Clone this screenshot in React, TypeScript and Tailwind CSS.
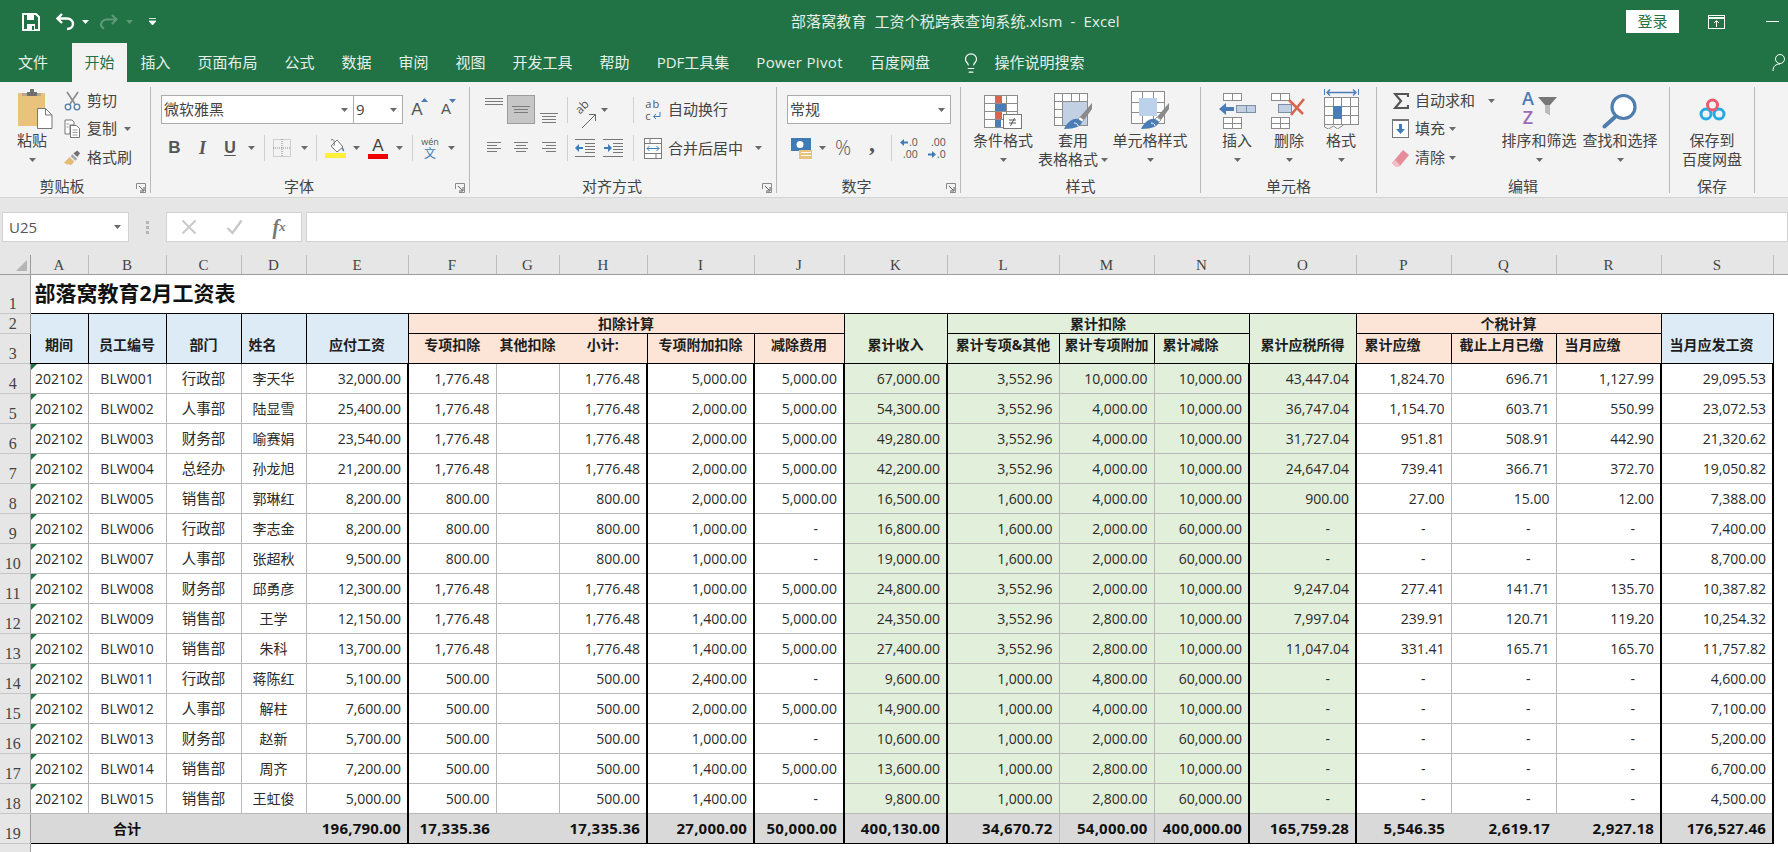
import type { ReactNode } from 'react'
import { Lightbulb } from 'lucide-react'

const COL_LETTERS = ['A', 'B', 'C', 'D', 'E', 'F', 'G', 'H', 'I', 'J', 'K', 'L', 'M', 'N', 'O', 'P', 'Q', 'R', 'S']

const COL_WIDTHS = [
  'w-[30px]', 'w-[58px]', 'w-[78px]', 'w-[75px]', 'w-[65px]', 'w-[102px]', 'w-[88px]', 'w-[63px]', 'w-[88px]', 'w-[107px]', 'w-[90px]',
  'w-[103px]', 'w-[112px]', 'w-[95px]', 'w-[95px]', 'w-[107px]', 'w-[95px]', 'w-[105px]', 'w-[105px]', 'w-[112px]', 'w-[15px]',
]

// id, dept, name, then columns E..S
const ROWS: string[][] = [
  ['BLW001', '行政部', '李天华', '32,000.00', '1,776.48', '', '1,776.48', '5,000.00', '5,000.00', '67,000.00', '3,552.96', '10,000.00', '10,000.00', '43,447.04', '1,824.70', '696.71', '1,127.99', '29,095.53'],
  ['BLW002', '人事部', '陆显雪', '25,400.00', '1,776.48', '', '1,776.48', '2,000.00', '5,000.00', '54,300.00', '3,552.96', '4,000.00', '10,000.00', '36,747.04', '1,154.70', '603.71', '550.99', '23,072.53'],
  ['BLW003', '财务部', '喻赛娟', '23,540.00', '1,776.48', '', '1,776.48', '2,000.00', '5,000.00', '49,280.00', '3,552.96', '4,000.00', '10,000.00', '31,727.04', '951.81', '508.91', '442.90', '21,320.62'],
  ['BLW004', '总经办', '孙龙旭', '21,200.00', '1,776.48', '', '1,776.48', '2,000.00', '5,000.00', '42,200.00', '3,552.96', '4,000.00', '10,000.00', '24,647.04', '739.41', '366.71', '372.70', '19,050.82'],
  ['BLW005', '销售部', '郭琳红', '8,200.00', '800.00', '', '800.00', '2,000.00', '5,000.00', '16,500.00', '1,600.00', '4,000.00', '10,000.00', '900.00', '27.00', '15.00', '12.00', '7,388.00'],
  ['BLW006', '行政部', '李志金', '8,200.00', '800.00', '', '800.00', '1,000.00', '-', '16,800.00', '1,600.00', '2,000.00', '60,000.00', '-', '-', '-', '-', '7,400.00'],
  ['BLW007', '人事部', '张超秋', '9,500.00', '800.00', '', '800.00', '1,000.00', '-', '19,000.00', '1,600.00', '2,000.00', '60,000.00', '-', '-', '-', '-', '8,700.00'],
  ['BLW008', '财务部', '邱勇彦', '12,300.00', '1,776.48', '', '1,776.48', '1,000.00', '5,000.00', '24,800.00', '3,552.96', '2,000.00', '10,000.00', '9,247.04', '277.41', '141.71', '135.70', '10,387.82'],
  ['BLW009', '销售部', '王学', '12,150.00', '1,776.48', '', '1,776.48', '1,400.00', '5,000.00', '24,350.00', '3,552.96', '2,800.00', '10,000.00', '7,997.04', '239.91', '120.71', '119.20', '10,254.32'],
  ['BLW010', '销售部', '朱科', '13,700.00', '1,776.48', '', '1,776.48', '1,400.00', '5,000.00', '27,400.00', '3,552.96', '2,800.00', '10,000.00', '11,047.04', '331.41', '165.71', '165.70', '11,757.82'],
  ['BLW011', '行政部', '蒋陈红', '5,100.00', '500.00', '', '500.00', '2,400.00', '-', '9,600.00', '1,000.00', '4,800.00', '60,000.00', '-', '-', '-', '-', '4,600.00'],
  ['BLW012', '人事部', '解柱', '7,600.00', '500.00', '', '500.00', '2,000.00', '5,000.00', '14,900.00', '1,000.00', '4,000.00', '10,000.00', '-', '-', '-', '-', '7,100.00'],
  ['BLW013', '财务部', '赵新', '5,700.00', '500.00', '', '500.00', '1,000.00', '-', '10,600.00', '1,000.00', '2,000.00', '60,000.00', '-', '-', '-', '-', '5,200.00'],
  ['BLW014', '销售部', '周齐', '7,200.00', '500.00', '', '500.00', '1,400.00', '5,000.00', '13,600.00', '1,000.00', '2,800.00', '10,000.00', '-', '-', '-', '-', '6,700.00'],
  ['BLW015', '销售部', '王虹俊', '5,000.00', '500.00', '', '500.00', '1,400.00', '-', '9,800.00', '1,000.00', '2,800.00', '60,000.00', '-', '-', '-', '-', '4,500.00'],
]

const TOTALS = ['196,790.00', '17,335.36', '', '17,335.36', '27,000.00', '50,000.00', '400,130.00', '34,670.72', '54,000.00', '400,000.00', '165,759.28', '5,546.35', '2,619.17', '2,927.18', '176,527.46']

// index into E..S: which columns end in a thick rule, which are tinted green
const THICK = [0, 3, 4, 5, 6, 9, 10, 13, 14]
const GREEN = [6, 7, 8, 9, 10]

function Caret({ className = '' }: { className?: string }) {
  return (
    <svg width="7" height="4" viewBox="0 0 7 4" className={`shrink-0 ${className}`}>
      <path d="M0 0h7L3.5 4z" fill="#6a6a6a" />
    </svg>
  )
}

function Cell({ className, children }: { className: string; children?: ReactNode }) {
  return <div className={`flex shrink-0 items-center justify-center ${className}`}>{children}</div>
}

function Sep() {
  return <div className="h-[26px] w-px bg-[#d0d0d0]" />
}

function Launcher() {
  return (
    <svg width="10" height="10" viewBox="0 0 10 10" className="absolute right-[4px] top-[5px]">
      <path d="M.5 6V.5H9.5V9.5H4" fill="none" stroke="#8a8a8a" />
      <path d="M3 3l4.500 4.500M8 4v4H4" fill="none" stroke="#5f5f5f" />
    </svg>
  )
}

function Group({ w, caption, pad = '', launcher, children }: { w: string; caption: string; pad?: string; launcher?: boolean; children: ReactNode }) {
  return (
    <div className={`mt-[5px] flex h-[106px] shrink-0 flex-col border-r border-[#b9b9b9] ${w}`}>
      <div className="flex h-[91px]">{children}</div>
      <div className={`relative h-[15px] text-center text-[15px] leading-[16px] text-[#444] ${pad}`}>
        {caption}
        {launcher && <Launcher />}
      </div>
    </div>
  )
}

function Big({ w, icon, lines, arrow = true }: { w: string; icon: ReactNode; lines: ReactNode[]; arrow?: boolean }) {
  return (
    <div className={`flex shrink-0 flex-col items-center text-[15px] leading-[19px] text-[#444] ${w}`}>
      <div className="flex h-[44px] items-end justify-center pb-[2px]">{icon}</div>
      {lines.map((line, i) => (
        <div key={i} className="flex items-center whitespace-nowrap">{line}</div>
      ))}
      {arrow && lines.length === 1 && (
        <div className="flex h-[19px] items-center">
          <Caret />
        </div>
      )}
    </div>
  )
}

function SmallRow({ h, icon, label, caret, caretGap = 'ml-[7px]' }: { h: string; icon: ReactNode; label: string; caret?: boolean; caretGap?: string }) {
  return (
    <div className={`flex items-center text-[15px] leading-[20px] text-[#444] ${h}`}>
      <div className="flex w-[17px] shrink-0 justify-center">{icon}</div>
      <span className="ml-[6px] -translate-y-[1px] whitespace-nowrap">{label}</span>
      {caret && <Caret className={caretGap} />}
    </div>
  )
}

function Combo({ w, label, className = '' }: { w: string; label: string; className?: string }) {
  return (
    <div className={`flex h-[29px] shrink-0 items-center justify-between border border-[#ababab] bg-white pl-[2px] pr-[5px] text-[15px] text-[#444] ${w} ${className}`}>
      <span>{label}</span>
      <Caret />
    </div>
  )
}

function Lines({ rows }: { rows: [number, number, number][] }) {
  return (
    <svg width="20" height="18" viewBox="0 0 20 18">
      {rows.map(([x1, x2, y], i) => (
        <path key={i} d={`M${x1} ${y + 0.5}H${x2}`} stroke="#7a7a7a" />
      ))}
    </svg>
  )
}

function IndentIcon({ flip }: { flip?: boolean }) {
  return (
    <svg width="20" height="18" viewBox="0 0 20 18">
      <path d="M0 .5H20M0 17.500H20M10 4.500H20M10 7.500H20M10 10.500H20M10 13.500H20" stroke="#777" />
      <path d={flip ? 'M1 8h4V5l4 4-4 4v-3H1z' : 'M8 8H4V5L0 9l4 4v-3h4z'} fill="#3f7cb6" />
    </svg>
  )
}

function FontStep({ size, up }: { size: string; up?: boolean }) {
  return (
    <div className={`relative font-['Liberation_Sans',sans-serif] text-[#555] ${size}`}>
      A
      <svg width="7" height="4" viewBox="0 0 7 4" className="absolute -right-[5px] top-[1px]">
        <path d={up ? 'M0 4h7L3.500 0z' : 'M0 0h7L3.500 4z'} fill="#4b7cb6" />
      </svg>
    </div>
  )
}

function DecArrow({ right }: { right?: boolean }) {
  return (
    <svg width="8" height="7" viewBox="0 0 8 7" className="mr-[1px] inline-block">
      <path d={right ? 'M0 2.500h4V0l4 3.500L4 7V4.500H0z' : 'M8 2.500H4V0L0 3.500 4 7V4.500h4z'} fill="#3f7cb6" />
    </svg>
  )
}

const ScissorsIcon = (
  <svg width="17" height="20" viewBox="0 0 17 20" fill="none">
    <path d="M3 1l8 12M14 1L6 13" stroke="#8a8a8a" strokeWidth="1.600" />
    <circle cx="4" cy="16" r="2.800" stroke="#4f7eae" strokeWidth="1.300" />
    <circle cx="13" cy="16" r="2.800" stroke="#4f7eae" strokeWidth="1.300" />
  </svg>
)

const CopyIcon = (
  <svg width="17" height="19" viewBox="0 0 17 19" fill="none" stroke="#777">
    <path d="M1 1h7l2 2v3H6v9H1z" fill="#fff" />
    <path d="M6.500 6.500h6l3 3v9h-9z" fill="#fff" />
    <path d="M8.500 11h5M8.500 13.500h5M8.500 16h5M2.500 5h3M2.500 8h2" stroke="#999" />
  </svg>
)

const BrushIcon = (
  <svg width="18" height="17" viewBox="0 0 18 17">
    <path d="M0 13l6-6 5 5-4 4-2-2-1 1z" fill="#e2bb76" />
    <path d="M7 6l2-2 5 5-2 2z" fill="#a5a5a5" />
    <path d="M10 3l4-3 3 3-3 4z" fill="#6f6f6f" />
  </svg>
)

const PasteIcon = (
  <svg width="35" height="40" viewBox="0 0 35 40" className="ml-[6px]">
    <path d="M0 4h27v33H0z" fill="#e9c27c" />
    <path d="M9 3h3V0h4v3h3v4H9z" fill="#6f6f6f" />
    <path d="M4 4h5v3h10V4h4v3H4z" fill="#8b8b8b" opacity=".5" />
    <path d="M19.500 19.500h8l6.500 6.500v13.500h-14.500z" fill="#fff" stroke="#777" />
    <path d="M27.500 19.500v6.500h6.500" fill="none" stroke="#777" />
  </svg>
)

function Grid({ x, y, w, h, cols, rows, stroke = '#8c8c8c' }: { x: number; y: number; w: number; h: number; cols: number; rows: number; stroke?: string }) {
  const v = Array.from({ length: cols - 1 }, (_, i) => x + Math.round(((i + 1) * w) / cols))
  const r = Array.from({ length: rows - 1 }, (_, i) => y + Math.round(((i + 1) * h) / rows))
  return (
    <g fill="none" stroke={stroke}>
      <rect x={x + 0.5} y={y + 0.5} width={w} height={h} fill="#fff" />
      {v.map((vx) => (
        <path key={vx} d={`M${vx + 0.5} ${y}v${h}`} />
      ))}
      {r.map((ry) => (
        <path key={ry} d={`M${x} ${ry + 0.5}h${w}`} />
      ))}
    </g>
  )
}

const CondIcon = (
  <svg width="38" height="34" viewBox="0 0 38 34">
    <Grid x={0} y={0} w={33} h={32} cols={3} rows={4} />
    <path d="M11 1h7v7h-7z" fill="#d8654c" />
    <path d="M11 9h11v7H11z" fill="#4b7cb6" />
    <path d="M11 17h7v7h-7z" fill="#d8654c" />
    <path d="M11 25h6v7h-6z" fill="#4b7cb6" />
    <rect x="19.500" y="19.500" width="18" height="14" fill="#fff" stroke="#777" />
    <path d="M25 25h7M25 28h7M30.500 23l-4 8" stroke="#555" fill="none" />
  </svg>
)

const Bristle = (
  <g>
    <path d="M38 10v6l-8 11-4-3z" fill="#8a8a8a" />
    <path d="M26 24l4 3-2 2-4-3z" fill="#fff" stroke="#8a8a8a" strokeWidth=".7" />
    <path d="M10 36c3-6 8-11 14-10l4 3c-1 4-6 7-18 7z" fill="#4b7cb6" />
    <path d="M20 30c2 0 4 1 4 3" fill="none" stroke="#fff" />
  </g>
)

const TableFmtIcon = (
  <svg width="38" height="36" viewBox="0 0 38 36">
    <Grid x={0} y={0} w={33} h={32} cols={4} rows={4} />
    <path d="M9 9h24v23H9z" fill="#c2d0e4" />
    {Bristle}
  </svg>
)

const CellStyleIcon = (
  <svg width="38" height="38" viewBox="0 0 38 38">
    <Grid x={0} y={0} w={33} h={32} cols={3} rows={3} />
    <path d="M8 7h18v18H8z" fill="#bcd2ea" />
    <g transform="translate(0 2)">{Bristle}</g>
  </svg>
)

const InsertIcon = (
  <svg width="37" height="36" viewBox="0 0 37 36">
    <Grid x={4} y={0} w={18} h={7} cols={2} rows={1} />
    <rect x="17.500" y="12.500" width="19" height="7" fill="#c2d0e4" stroke="#7c8ea6" />
    <path d="M27.500 12.500v7" stroke="#7c8ea6" />
    <path d="M0 16l7-6v4h8v4H7v4z" fill="#4b7cb6" />
    <Grid x={4} y={24} w={18} h={11} cols={2} rows={2} />
  </svg>
)

const DeleteIcon = (
  <svg width="36" height="36" viewBox="0 0 36 36">
    <Grid x={0} y={0} w={18} h={7} cols={2} rows={1} />
    <rect x="7.500" y="11.500" width="13" height="8" fill="#c2d0e4" stroke="#7c8ea6" />
    <Grid x={0} y={24} w={18} h={11} cols={2} rows={2} />
    <path d="M18 7l14 14M33 6L20 22" stroke="#d8654c" strokeWidth="2.600" fill="none" />
  </svg>
)

const FormatIcon = (
  <svg width="35" height="40" viewBox="0 0 35 40">
    <path d="M.5 0v6M34.500 0v6" stroke="#4b7cb6" />
    <path d="M3 3.500h29M6 .5l-3 3 3 3M29 .5l3 3-3 3" stroke="#4b7cb6" strokeWidth="1.400" fill="none" />
    <Grid x={0} y={8} w={34} h={27} cols={4} rows={3} />
    <path d="M9 17h9v13H9z" fill="#4b7cb6" />
    <path d="M.5 35v3l4 2 5-3 4 3 6-4" fill="none" stroke="#8c8c8c" />
  </svg>
)

const SortIcon = (
  <div className="flex h-[40px] w-[37px] items-start">
    <div className="flex w-[15px] flex-col items-center text-[18px] leading-[19px] font-semibold">
      <span className="text-[#4b7cb6]">A</span>
      <span className="text-[#9a6ab8]">Z</span>
    </div>
    <svg width="21" height="19" viewBox="0 0 21 19" className="mt-[8px] ml-[1px]">
      <path d="M1 0h19l-7 8v10l-5-3V8z" fill="#777" />
      <path d="M8 8h5v10l-5-3z" fill="#bbb" />
    </svg>
  </div>
)

const SearchIcon = (
  <svg width="36" height="36" viewBox="0 0 36 36">
    <circle cx="21.500" cy="14" r="11.500" fill="#fff" stroke="#4f7eae" strokeWidth="3.200" />
    <path d="M13 24L2.500 33.500" stroke="#4f7eae" strokeWidth="4" strokeLinecap="round" />
  </svg>
)

const BaiduIcon = (
  <svg width="27" height="25" viewBox="0 0 27 25" fill="none">
    <circle cx="7" cy="17" r="5" stroke="#27a9e6" strokeWidth="3" />
    <circle cx="20" cy="17" r="5" stroke="#27a9e6" strokeWidth="3" />
    <circle cx="13.500" cy="8" r="5" stroke="#ee5a6e" strokeWidth="3" />
  </svg>
)

function HeaderCell({ className, children, ...rest }: { className: string; children?: ReactNode; colSpan?: number; rowSpan?: number }) {
  return (
    <td {...rest} className={`whitespace-nowrap p-0 text-[14px] leading-[18px] font-bold text-[#1d1d1d] ${className}`}>
      {children}
    </td>
  )
}

function RowHead({ n, h = 'h-[30px]' }: { n: number; h?: string }) {
  return (
    <td className={`border-r border-b border-r-[#9c9c9c] border-b-[#c6c6c6] bg-[#e6e6e6] p-0 pr-[4px] text-center align-bottom font-['Liberation_Serif',serif] text-[16px] leading-[18px] font-normal text-[#444] ${h}`}>
      {n}
    </td>
  )
}

const TAB_ITEM = 'flex items-center whitespace-nowrap px-[13.5px]'

export default function App() {
  return (
    <div className="h-[852px] w-[1788px] overflow-hidden bg-white font-['Open_Sans','Noto_Sans_CJK_SC',sans-serif]">
      {/* title bar */}
      <div className="relative flex h-[43px] items-center bg-[#217346] text-white">
        <div className="flex w-[180px] items-center pl-[22px]">
          <svg width="18" height="18" viewBox="0 0 18 18">
            <path d="M1 1h13l3 3v13H1z" fill="none" stroke="#fff" strokeWidth="2" />
            <path d="M5 2h7v5H5zM5 11h8v6H5z" fill="#fff" />
            <path d="M10 13h2v4h-2z" fill="#217346" />
          </svg>
          <svg width="20" height="18" viewBox="0 0 20 18" className="ml-[16px]" fill="none">
            <path d="M6 1L1.500 5.500 6 10" stroke="#fff" strokeWidth="2.400" />
            <path d="M2 5.500h9c4 0 6 3 6 5.500s-2 5-6 5" stroke="#fff" strokeWidth="2.400" />
          </svg>
          <Caret className="ml-[6px] [&_path]:fill-[#fff]" />
          <svg width="20" height="16" viewBox="0 0 20 16" className="ml-[9px]" fill="none">
            <path d="M14 1l4.500 4.500L14 10" stroke="#5c9a78" strokeWidth="2.200" />
            <path d="M18 5.500H9c-4 0-6 3-6 5s1 3 3 4" stroke="#5c9a78" strokeWidth="2.200" />
          </svg>
          <Caret className="ml-[8px] [&_path]:fill-[#5c9a78]" />
          <svg width="7" height="7" viewBox="0 0 7 7" className="ml-[16px]">
            <path d="M0 .5h7M0 3h7L3.500 7z" stroke="#fff" strokeWidth=".8" fill="#fff" />
          </svg>
        </div>
        <div className="flex-1 pl-[611px] text-[15px] tracking-[0.1px] whitespace-pre text-[#e3efe8]">部落窝教育  工资个税跨表查询系统.xlsm  -  Excel</div>
        <div className="flex h-[23px] w-[53px] items-center justify-center bg-white text-[15px] text-[#217346]">登录</div>
        <svg width="17" height="14" viewBox="0 0 17 14" className="ml-[29px]" fill="none" stroke="#fff">
          <rect x=".5" y=".5" width="16" height="13" />
          <path d="M.5 3h16" strokeWidth="2" />
          <path d="M8.500 12V6M6 8l2.500-2.500L11 8" />
        </svg>
        <div className="ml-[41px] mr-[9px] h-[1.5px] w-[13px] bg-white" />
      </div>

      {/* tabs */}
      <div className="flex h-[39px] items-stretch bg-[#217346] text-[15px] text-[#e6f0ea]">
        <div className="ml-[4px] mr-[10px] flex w-[58px] items-center justify-center">文件</div>
        <div className="flex w-[55px] items-center justify-center bg-[#f3f3f3] text-[#217346]">开始</div>
        <div className={TAB_ITEM}>插入</div>
        <div className={TAB_ITEM}>页面布局</div>
        <div className={TAB_ITEM}>公式</div>
        <div className={TAB_ITEM}>数据</div>
        <div className={TAB_ITEM}>审阅</div>
        <div className={TAB_ITEM}>视图</div>
        <div className={TAB_ITEM}>开发工具</div>
        <div className={TAB_ITEM}>帮助</div>
        <div className={TAB_ITEM}>PDF工具集</div>
        <div className={`${TAB_ITEM} tracking-[0.35px]`}>Power Pivot</div>
        <div className={TAB_ITEM}>百度网盘</div>
        <div className="ml-[17px] flex items-center">
          <Lightbulb size={22} strokeWidth={1.3} color="#ffffff" />
          <span className="ml-[12px] whitespace-nowrap">操作说明搜索</span>
        </div>
        <svg width="16" height="18" viewBox="0 0 16 18" className="ml-auto mt-[11px]" fill="none" stroke="#fff">
          <circle cx="8" cy="5" r="4.500" />
          <path d="M1 17c0-5 3-7 7-7" />
        </svg>
      </div>

      {/* ribbon */}
      <div className="flex h-[116px] border-b border-[#d4d4d4] bg-[#f3f3f3]">
        <Group w="w-[151px]" caption="剪贴板" pad="pr-[26px]" launcher>
          <Big w="w-[64px]" icon={PasteIcon} lines={['粘贴']} />
          <div className="flex flex-col">
            <SmallRow h="h-[27px]" icon={ScissorsIcon} label="剪切" />
            <SmallRow h="h-[29px]" icon={CopyIcon} label="复制" caret />
            <SmallRow h="h-[30px]" icon={BrushIcon} label="格式刷" />
          </div>
        </Group>

        <Group w="w-[319px]" caption="字体" pad="pr-[22px]" launcher>
          <div className="ml-[10px] flex flex-col pt-[8px]">
            <div className="flex items-center">
              <Combo w="w-[193px]" label="微软雅黑" />
              <Combo w="w-[50px]" label="9" className="-ml-px" />
              <Cell className="w-[28px]"><FontStep size="text-[17px]" up /></Cell>
              <Cell className="w-[30px]"><FontStep size="text-[15px]" /></Cell>
            </div>
            <div className="mt-[9px] flex h-[30px] items-center text-[#555]">
              <Cell className="w-[27px] font-['Liberation_Sans',sans-serif] text-[17px] font-bold">B</Cell>
              <Cell className="w-[29px] font-['Liberation_Serif',serif] text-[18px] font-bold italic">I</Cell>
              <Cell className="w-[26px] font-['Liberation_Sans',sans-serif] text-[16px] font-bold underline underline-offset-2">U</Cell>
              <Cell className="w-[17px]"><Caret /></Cell>
              <Cell className="w-[8px]"><Sep /></Cell>
              <Cell className="w-[28px]">
                <svg width="18" height="18" viewBox="0 0 18 18" fill="none" stroke="#a9a9a9" strokeDasharray="1 1">
                  <rect x=".5" y=".5" width="17" height="17" />
                  <path d="M9 0v18M0 9h18" stroke="#8a8a8a" />
                </svg>
              </Cell>
              <Cell className="w-[16px]"><Caret /></Cell>
              <Cell className="w-[8px]"><Sep /></Cell>
              <Cell className="w-[30px]">
                <svg width="21" height="20" viewBox="0 0 21 20">
                  <path d="M6 8l6-6 6 7-6 5z" fill="#fff" stroke="#777" />
                  <path d="M6 2c3-2 4 2 3 6" fill="none" stroke="#777" />
                  <path d="M17 9c2 2 2.500 3 2 4-1 1-2 0-2-4z" fill="#3f7cb6" />
                  <path d="M0 15h21v5H0z" fill="#ffef3a" />
                </svg>
              </Cell>
              <Cell className="w-[12px]"><Caret /></Cell>
              <Cell className="w-[32px]">
                <div className="flex flex-col items-center">
                  <span className="font-['Liberation_Sans',sans-serif] text-[17px] leading-[15px] font-medium text-[#444]">A</span>
                  <div className="mt-[1px] h-[5px] w-[20px] bg-[#ee0000]" />
                </div>
              </Cell>
              <Cell className="w-[10px]"><Caret /></Cell>
              <Cell className="w-[16px]"><Sep /></Cell>
              <Cell className="w-[20px]">
                <div className="flex flex-col items-center text-[9px] leading-[11px] text-[#555]">
                  <span>wén</span>
                  <span className="text-[12px] leading-[13px] text-[#3f7cb6]">文</span>
                </div>
              </Cell>
              <Cell className="w-[22px]"><Caret /></Cell>
            </div>
          </div>
        </Group>

        <Group w="w-[307px]" caption="对齐方式" pad="pr-[22px]" launcher>
          <div className="ml-[10px] flex flex-col pt-[8px]">
            <div className="flex h-[29px] items-center">
              <Cell className="w-[27px] -translate-y-[5px]"><Lines rows={[[1, 19, 2], [1, 19, 5], [1, 19, 8]]} /></Cell>
              <Cell className="h-[29px] w-[28px] border border-[#9c9c9c] bg-[#c6c6c6]"><Lines rows={[[1, 19, 5], [3, 17, 8], [3, 17, 11]]} /></Cell>
              <Cell className="w-[28px] translate-y-[5px]"><Lines rows={[[1, 19, 7], [3, 17, 10], [3, 17, 13], [3, 17, 16]]} /></Cell>
              <Cell className="w-[8px]"><Sep /></Cell>
              <Cell className="relative w-[28px]">
                <span className="-translate-x-[3px] -translate-y-[3px] -rotate-45 text-[12px] leading-[12px] text-[#555]">ab</span>
                <svg width="24" height="24" viewBox="0 0 24 24" className="absolute top-[3px] left-[2px]">
                  <path d="M9 21L22 8M16 7.500h6.500V14" fill="none" stroke="#666" />
                </svg>
              </Cell>
              <Cell className="w-[10px]"><Caret /></Cell>
              <Cell className="ml-[20px] w-[8px]"><Sep /></Cell>
              <Cell className="ml-[4px] w-[24px]">
                <div className="flex flex-col items-start text-[11px] leading-[12px] text-[#555]">
                  <span className="tracking-[1px]">ab</span>
                  <span className="flex items-center">
                    c
                    <svg width="9" height="8" viewBox="0 0 9 8" className="ml-[1px]" fill="none" stroke="#3f7cb6">
                      <path d="M8 0v4.500H1.500M4 2L1.500 4.500 4 7" />
                    </svg>
                  </span>
                </div>
              </Cell>
              <span className="ml-[3px] text-[15px] text-[#444]">自动换行</span>
            </div>
            <div className="mt-[9px] flex h-[30px] items-center">
              <Cell className="w-[27px]"><Lines rows={[[3, 17, 3], [3, 13, 6], [3, 17, 9], [3, 13, 12]]} /></Cell>
              <Cell className="w-[27px]"><Lines rows={[[3, 17, 3], [5, 15, 6], [3, 17, 9], [5, 15, 12]]} /></Cell>
              <Cell className="w-[29px]"><Lines rows={[[3, 17, 3], [7, 17, 6], [3, 17, 9], [7, 17, 12]]} /></Cell>
              <Cell className="w-[8px]"><Sep /></Cell>
              <Cell className="w-[28px]"><IndentIcon /></Cell>
              <Cell className="w-[28px]"><IndentIcon flip /></Cell>
              <Cell className="ml-[2px] w-[8px]"><Sep /></Cell>
              <Cell className="ml-[4px] w-[24px]">
                <svg width="18" height="21" viewBox="0 0 18 21" fill="none" stroke="#7a7a7a">
                  <rect x=".5" y=".5" width="17" height="20" fill="#fff" />
                  <path d="M0 5.500h18M0 15.500h18M6 0v5M12 15v6" />
                  <path d="M3 10.500h12M5.500 8L3 10.500 5.500 13M12.500 8l2.500 2.500-2.500 2.500" stroke="#3f7cb6" />
                </svg>
              </Cell>
              <span className="ml-[3px] text-[15px] whitespace-nowrap text-[#444]">合并后居中</span>
              <Caret className="ml-[12px]" />
            </div>
          </div>
        </Group>

        <Group w="w-[184px]" caption="数字" pad="pr-[24px]" launcher>
          <div className="ml-[10px] flex flex-col pt-[8px]">
            <Combo w="w-[164px]" label="常规" />
            <div className="mt-[9px] flex h-[30px] items-center">
              <Cell className="w-[28px]">
                <svg width="21" height="21" viewBox="0 0 21 21">
                  <path d="M0 0h20v13H0z" fill="#3f7cb6" />
                  <circle cx="9" cy="6.500" r="3.500" fill="#fff" />
                  <path d="M8 12h13v9H8z" fill="#eac27c" />
                  <path d="M10 14.500h10M10 17.500h10" stroke="#fff" />
                </svg>
              </Cell>
              <Cell className="w-[14px]"><Caret /></Cell>
              <Cell className="w-[28px] text-[20px] font-light text-[#555]">%</Cell>
              <Cell className="w-[30px] -translate-y-[5px] font-['Liberation_Serif',serif] text-[24px] leading-[22px] font-bold text-[#555]">,</Cell>
              <Cell className="w-[8px]"><Sep /></Cell>
              <Cell className="w-[28px]">
                <div className="flex flex-col items-end text-[10.5px] leading-[12px] text-[#555]">
                  <span className="flex items-center"><DecArrow />.0</span>
                  <span>.00</span>
                </div>
              </Cell>
              <Cell className="w-[28px]">
                <div className="flex flex-col items-end text-[10.5px] leading-[12px] text-[#555]">
                  <span>.00</span>
                  <span className="flex items-center"><DecArrow right />.0</span>
                </div>
              </Cell>
            </div>
          </div>
        </Group>

        <Group w="w-[240px]" caption="样式">
          <Big w="w-[84px]" icon={CondIcon} lines={['条件格式']} />
          <Big w="w-[56px]" icon={TableFmtIcon} lines={['套用', <>表格格式<Caret className="ml-[3px]" /></>]} />
          <Big w="w-[98px]" icon={CellStyleIcon} lines={['单元格样式']} />
        </Group>

        <Group w="w-[176px]" caption="单元格">
          <Big w="w-[72px]" icon={InsertIcon} lines={['插入']} />
          <Big w="w-[32px]" icon={DeleteIcon} lines={['删除']} />
          <Big w="w-[72px]" icon={FormatIcon} lines={['格式']} />
        </Group>

        <Group w="w-[293px]" caption="编辑">
          <div className="flex w-[125px] shrink-0 flex-col pl-[15px]">
            <SmallRow
              h="h-[27px]"
              caret
              caretGap="ml-[13px]"
              label="自动求和"
              icon={
                <svg width="16" height="16" viewBox="0 0 16 16">
                  <path d="M15 4V1H2l6 7-6 7h13v-3" fill="none" stroke="#555" strokeWidth="2.200" />
                </svg>
              }
            />
            <SmallRow
              h="h-[29px]"
              caret
              caretGap="ml-[4px]"
              label="填充"
              icon={
                <svg width="17" height="19" viewBox="0 0 17 19">
                  <rect x=".5" y=".5" width="16" height="18" fill="#fff" stroke="#777" />
                  <path d="M0 0h17v2H0z" fill="#777" />
                  <path d="M7 5h3v5h3l-4.500 5L4 10h3z" fill="#3f7cb6" />
                </svg>
              }
            />
            <SmallRow
              h="h-[30px]"
              caret
              caretGap="ml-[4px]"
              label="清除"
              icon={
                <svg width="17" height="17" viewBox="0 0 17 17">
                  <path d="M11 0l6 5-9 11-4 1-4-4z" fill="#e78c9a" />
                  <path d="M0 13l3-3 5 5-2 2H4z" fill="#f2c0c8" />
                </svg>
              }
            />
          </div>
          <Big w="w-[74px]" icon={SortIcon} lines={['排序和筛选']} />
          <Big w="w-[88px]" icon={SearchIcon} lines={['查找和选择']} />
        </Group>

        <Group w="w-[85px]" caption="保存">
          <Big w="w-[84px]" icon={<div className="pb-[7px]">{BaiduIcon}</div>} lines={['保存到', '百度网盘']} arrow={false} />
        </Group>
      </div>

      {/* formula bar */}
      <div className="flex h-[57px] items-start bg-[#e6e6e6] pt-[14px] pb-[13px]">
        <div className="ml-[2px] flex h-[30px] w-[127px] items-center justify-between border border-[#d2d2d2] bg-white pl-[6px] pr-[7px] text-[15px] text-[#555]">
          U25
          <Caret />
        </div>
        <div className="flex h-[30px] w-[37px] flex-col items-center justify-center gap-[2px]">
          <div className="h-[3px] w-[3px] bg-[#b5b5b5]" />
          <div className="h-[3px] w-[3px] bg-[#b5b5b5]" />
          <div className="h-[3px] w-[3px] bg-[#b5b5b5]" />
        </div>
        <div className="flex h-[30px] w-[136px] items-center border border-[#d2d2d2] bg-white">
          <Cell className="w-[44px]">
            <svg width="16" height="16" viewBox="0 0 16 16">
              <path d="M1.500 1.500l13 13M14.500 1.500l-13 13" stroke="#c9c9c9" strokeWidth="2" />
            </svg>
          </Cell>
          <Cell className="w-[46px]">
            <svg width="17" height="16" viewBox="0 0 17 16" fill="none">
              <path d="M1.500 9l5 5L15.500 1.500" stroke="#c9c9c9" strokeWidth="2.400" />
            </svg>
          </Cell>
          <Cell className="w-[44px] font-['Liberation_Serif',serif] text-[20px] font-bold text-[#777] italic">
            f<span className="text-[13px]">x</span>
          </Cell>
        </div>
        <div className="ml-[4px] h-[30px] flex-1 border border-[#d2d2d2] bg-white" />
      </div>

      {/* sheet */}
      <table className="w-[1788px] table-fixed border-collapse">
        <colgroup>
          {COL_WIDTHS.map((w, i) => (
            <col key={i} className={w} />
          ))}
        </colgroup>
        <tbody>
          <tr className="h-[19px]">
            <td className="border-r border-b border-[#9c9c9c] bg-[#e6e6e6] p-0">
              <svg width="30" height="19" viewBox="0 0 30 19" className="block">
                <path d="M27 5v11H16z" fill="#b5b5b5" />
              </svg>
            </td>
            {COL_LETTERS.map((c) => (
              <td key={c} className="border-r border-b border-r-[#bdbdbd] border-b-[#9c9c9c] bg-[#e6e6e6] p-0 text-center align-bottom font-['Liberation_Serif',serif] text-[15px] leading-[18px] text-[#444]">
                {c}
              </td>
            ))}
            <td className="border-b border-b-[#9c9c9c] bg-[#e6e6e6] p-0" />
          </tr>
          <tr className="h-[39px]">
            <RowHead n={1} h="h-[39px]" />
            <td colSpan={19} className="whitespace-nowrap p-0 pl-[4px] text-[21px] font-bold text-[#111]">部落窝教育2月工资表</td>
            <td />
          </tr>
          <tr className="h-[20px]">
            <RowHead n={2} h="h-[20px]" />
            <HeaderCell rowSpan={2} className="border border-black bg-[#ddebf7] pt-[12px] text-center">期间</HeaderCell>
            <HeaderCell rowSpan={2} className="border border-black bg-[#ddebf7] pt-[12px] text-center">员工编号</HeaderCell>
            <HeaderCell rowSpan={2} className="border border-black bg-[#ddebf7] pt-[12px] text-center">部门</HeaderCell>
            <HeaderCell rowSpan={2} className="border border-black bg-[#ddebf7] pt-[12px] pl-[7px]">姓名</HeaderCell>
            <HeaderCell rowSpan={2} className="border border-black bg-[#ddebf7] pt-[12px] text-center">应付工资</HeaderCell>
            <HeaderCell colSpan={5} className="border border-black bg-[#fce4d6] text-center">扣除计算</HeaderCell>
            <HeaderCell rowSpan={2} className="border border-black bg-[#e2efda] pt-[12px] text-center">累计收入</HeaderCell>
            <HeaderCell colSpan={3} className="border border-black bg-[#e2efda] text-center">累计扣除</HeaderCell>
            <HeaderCell rowSpan={2} className="border border-black bg-[#e2efda] pt-[12px] text-center">累计应税所得</HeaderCell>
            <HeaderCell colSpan={3} className="border border-black bg-[#fce4d6] text-center">个税计算</HeaderCell>
            <HeaderCell rowSpan={2} className="border border-black bg-[#ddebf7] pt-[12px] pl-[8px]">当月应发工资</HeaderCell>
            <td />
          </tr>
          <tr className="h-[30px]">
            <RowHead n={3} />
            <HeaderCell className="border-y border-l border-black bg-[#fce4d6] pb-[8px] text-center">专项扣除</HeaderCell>
            <HeaderCell className="border-y border-black bg-[#fce4d6] pb-[8px] text-center">其他扣除</HeaderCell>
            <HeaderCell className="border-y border-r border-black bg-[#fce4d6] pb-[8px] text-center">小计:</HeaderCell>
            <HeaderCell className="border border-black bg-[#fce4d6] pb-[8px] text-center">专项附加扣除</HeaderCell>
            <HeaderCell className="border border-black bg-[#fce4d6] pb-[8px] text-center">减除费用</HeaderCell>
            <HeaderCell className="border border-black bg-[#e2efda] pb-[8px] text-center">累计专项&amp;其他</HeaderCell>
            <HeaderCell className="border border-black bg-[#e2efda] pb-[8px] text-center">累计专项附加</HeaderCell>
            <HeaderCell className="border border-black bg-[#e2efda] pb-[8px] pl-[8px]">累计减除</HeaderCell>
            <HeaderCell className="border border-black bg-[#fce4d6] pb-[8px] pl-[8px]">累计应缴</HeaderCell>
            <HeaderCell className="border border-black bg-[#fce4d6] pb-[8px] pl-[8px]">截止上月已缴</HeaderCell>
            <HeaderCell className="border border-black bg-[#fce4d6] pb-[8px] pl-[8px]">当月应缴</HeaderCell>
            <td />
          </tr>
          {ROWS.map((row, i) => (
            <tr key={row[0]} className="h-[30px]">
              <RowHead n={i + 4} />
              <td className="relative border border-[#b8b8b8] p-0 text-center text-[14px] text-[#2a2a2a]">
                <div className="absolute top-0 left-0 h-0 w-0 border-t-[6px] border-r-[6px] border-t-[#217346] border-r-transparent" />
                202102
              </td>
              <td className="border border-[#b8b8b8] p-0 text-center text-[14px] text-[#2a2a2a]">{row[0]}</td>
              <td className="border border-[#b8b8b8] p-0 text-center text-[14.5px] text-[#2a2a2a]">{row[1]}</td>
              <td className="border border-[#b8b8b8] p-0 text-center text-[14px] text-[#2a2a2a]">{row[2]}</td>
              {row.slice(3).map((v, j) => (
                <td
                  key={j}
                  className={`border border-[#b8b8b8] p-0 text-right text-[14px] text-[#2a2a2a] ${v === '-' ? 'pr-[25px]' : 'pr-[6px]'} ${THICK.includes(j) ? 'border-r-2 border-r-black' : ''} ${GREEN.includes(j) ? 'bg-[#e2efda]' : ''}`}
                >
                  {v}
                </td>
              ))}
              <td />
            </tr>
          ))}
          <tr className="h-[30px]">
            <RowHead n={19} />
            <td className="border-y border-black bg-[#d9d9d9] p-0" />
            <td className="border-y border-black bg-[#d9d9d9] p-0 text-center text-[14px] font-bold text-[#111]">合计</td>
            <td className="border-y border-black bg-[#d9d9d9] p-0" />
            <td className="border-y border-black bg-[#d9d9d9] p-0" />
            {TOTALS.map((v, j) => (
              <td
                key={j}
                className={`border-y border-black bg-[#d9d9d9] p-0 pr-[6px] text-right text-[15px] font-bold tracking-[0.2px] text-[#111] ${THICK.includes(j) ? 'border-r-2 border-r-black' : ''} ${GREEN.includes(j) && !THICK.includes(j) ? 'border-r border-r-[#b8b8b8]' : ''}`}
              >
                {v}
              </td>
            ))}
            <td />
          </tr>
          <tr className="h-[30px]">
            <RowHead n={20} />
            <td colSpan={20} />
          </tr>
        </tbody>
      </table>
    </div>
  )
}
